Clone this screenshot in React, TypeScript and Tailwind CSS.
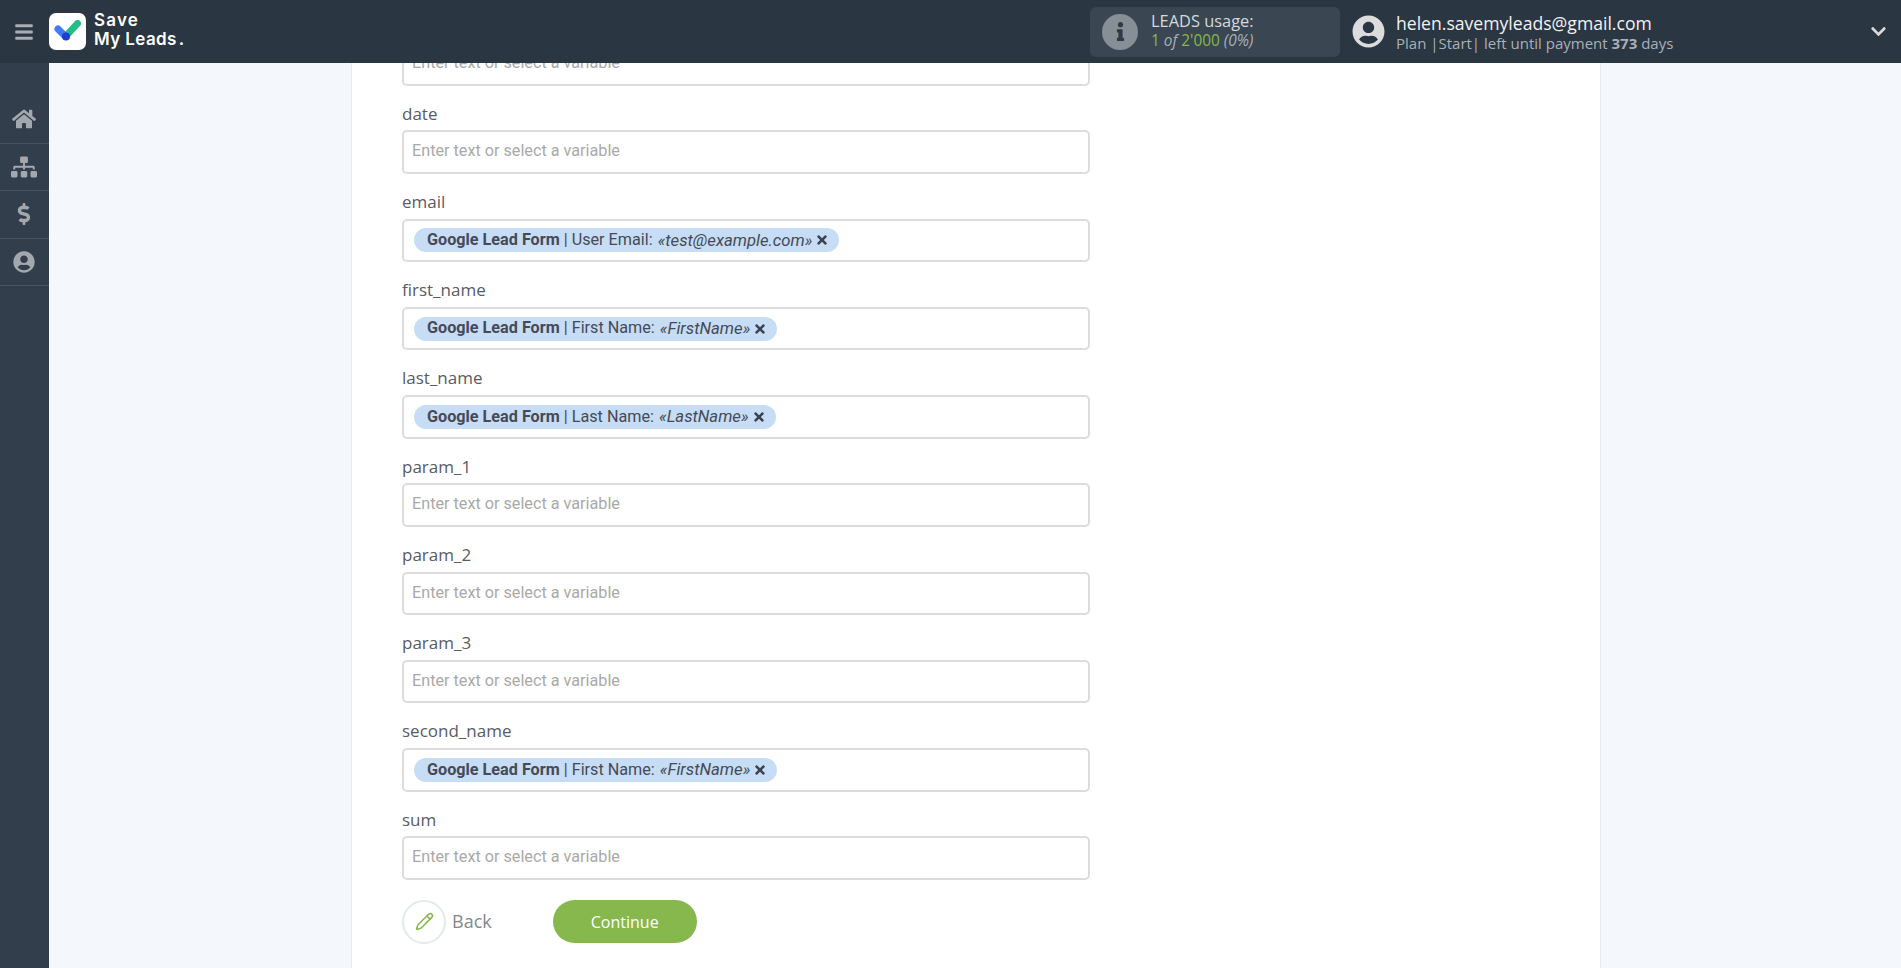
import React from 'react'
import { FaHome, FaSitemap, FaDollarSign, FaUserCircle, FaInfo, FaChevronDown, FaBars, FaTimes } from 'react-icons/fa'
import { LuPencil } from 'react-icons/lu'

const chips: Record<string, [string, string]> = {
  email: ['User Email', 'test@example.com'],
  first_name: ['First Name', 'FirstName'],
  last_name: ['Last Name', 'LastName'],
  second_name: ['First Name', 'FirstName'],
}

const fields = ['date', 'email', 'first_name', 'last_name', 'param_1', 'param_2', 'param_3', 'second_name', 'sum']

const Placeholder = () => (
  <span className="text-[#a9a9a9] font-['Roboto',sans-serif] text-[16.2px] leading-none -mt-[1px]">Enter text or select a variable</span>
)

const Box = ({ children }: { children?: React.ReactNode }) => (
  <div className="h-[43.5px] w-[688px] border-2 border-[#dcdcdc] rounded-[5px] bg-white flex items-center pl-[8px]">
    {children}
  </div>
)

const Chip = ({ name, value }: { name: string; value: string }) => (
  <div className="ml-[2px] h-[24px] rounded-full bg-[#c7dcf5] flex items-center pl-[13px] pr-[10px] font-['Roboto',sans-serif] text-[16.2px] text-[#444b57] whitespace-nowrap">
    <b className="font-bold">Google Lead Form</b>
    <span className="ml-[4px]">| {name}:</span>
    <i className="ml-[5px] text-[16.7px]">«{value}»</i>
    <FaTimes className="ml-[3px] text-[#3c4350]" size={14} />
  </div>
)

const Field = ({ label }: { label: string }) => (
  <div className="h-[88.25px]">
    <div className="h-[44.75px] pt-[16px] text-[17px] leading-[24px] font-medium text-[#585c63]">{label}</div>
    <Box>
      {chips[label] ? <Chip name={chips[label][0]} value={chips[label][1]} /> : <Placeholder />}
    </Box>
  </div>
)

const navItems = [
  { icon: <FaHome size={24} /> },
  { icon: <FaSitemap size={26} /> },
  { icon: <FaDollarSign size={22} /> },
  { icon: <FaUserCircle size={22} /> },
]

export default function App() {
  return (
    <div className="h-[968px] w-full overflow-hidden flex flex-col bg-[#f4f7fc] font-['Open_Sans',sans-serif]">
      <header className="h-[63px] shrink-0 bg-[#2b3643] flex items-center text-white">
        <div className="w-[49px] pr-[1px] flex justify-center text-[#a9aeb4]">
          <FaBars size={20} />
        </div>
        <div className="h-[37px] w-[37px] rounded-[7px] bg-white flex items-center justify-center">
          <svg width="28" height="24" viewBox="0 0 28 24">
            <path d="M23.5 3.5 L12 16" stroke="#1fbf85" strokeWidth="7" strokeLinecap="round" fill="none" />
            <path d="M4 9 L11 16" stroke="#3f7bf6" strokeWidth="7" strokeLinecap="round" fill="none" />
            <circle cx="12" cy="16.5" r="4" fill="#1c3fd6" />
          </svg>
        </div>
        <div className="ml-[8px] -mt-[3px] text-[17px] leading-[19px] font-semibold font-['Inter',sans-serif] tracking-[0.4px]">
          <div className="tracking-[1.2px]">Save</div>
          <div>My Leads<span className="ml-[2px]">.</span></div>
        </div>
        <div className="ml-auto h-[50px] w-[250px] rounded-[6px] bg-[#3a4651] flex items-center">
          <div className="ml-[12px] h-[36px] w-[36px] rounded-full bg-[#868e96] flex items-center justify-center text-[#2f3a46]">
            <FaInfo size={19} />
          </div>
          <div className="ml-[13px] -mt-[2px]">
            <div className="text-[16.4px] leading-[21px] text-[#d5d9dc]">LEADS usage:</div>
            <div className="text-[15.4px] leading-[20px] text-[#a9b0b6] italic">
              <span className="not-italic text-[#86b84e]">1</span> of <span className="not-italic text-[#86b84e]">2'000</span> (0%)
            </div>
          </div>
        </div>
        <div className="ml-[12px] text-[#dcdcdc]">
          <FaUserCircle size={33} />
        </div>
        <div className="ml-[11px] w-[473.5px]">
          <div className="text-[17.6px] leading-[22px] mt-[1px] text-[#f2f2f2]">helen.savemyleads@gmail.com</div>
          <div className="text-[15px] leading-[19px] text-[#aab0b6]">
            Plan |Start| left until payment <b className="font-bold">373</b> days
          </div>
        </div>
        <div className="w-[26px] pr-[9px] text-[#d8dadd]">
          <FaChevronDown size={17} />
        </div>
        <div className="w-[5.5px]" />
      </header>
      <div className="flex-1 flex min-h-0">
        <aside className="w-[49px] shrink-0 bg-[#323e4c] pt-[33px] text-[#a3a8ae]">
          {navItems.map((item, i) => (
            <div key={i} className="h-[47.5px] pr-[1px] flex items-center justify-center border-b border-[#47525f]">
              {item.icon}
            </div>
          ))}
        </aside>
        <main className="flex-1 min-w-0 overflow-hidden pl-[302px] pr-[300px]">
          <div className="h-full overflow-hidden bg-white border-x border-[#e7ebf0] pl-[50px]">
            <div className="-mt-[21px]">
              <Box><Placeholder /></Box>
            </div>
            {fields.map(f => <Field key={f} label={f} />)}
            <div className="mt-[20px] flex items-center">
              <div className="h-[44px] w-[44px] rounded-full border-2 border-[#e3ebe8] flex items-center justify-center text-[#86b84e]">
                <LuPencil size={19} />
              </div>
              <span className="ml-[6px] text-[18px] text-[#85878b]">Back</span>
              <button className="ml-[61px] h-[43px] w-[144px] rounded-full bg-[#86b84e] text-white text-[16px]">Continue</button>
            </div>
          </div>
        </main>
      </div>
    </div>
  )
}
